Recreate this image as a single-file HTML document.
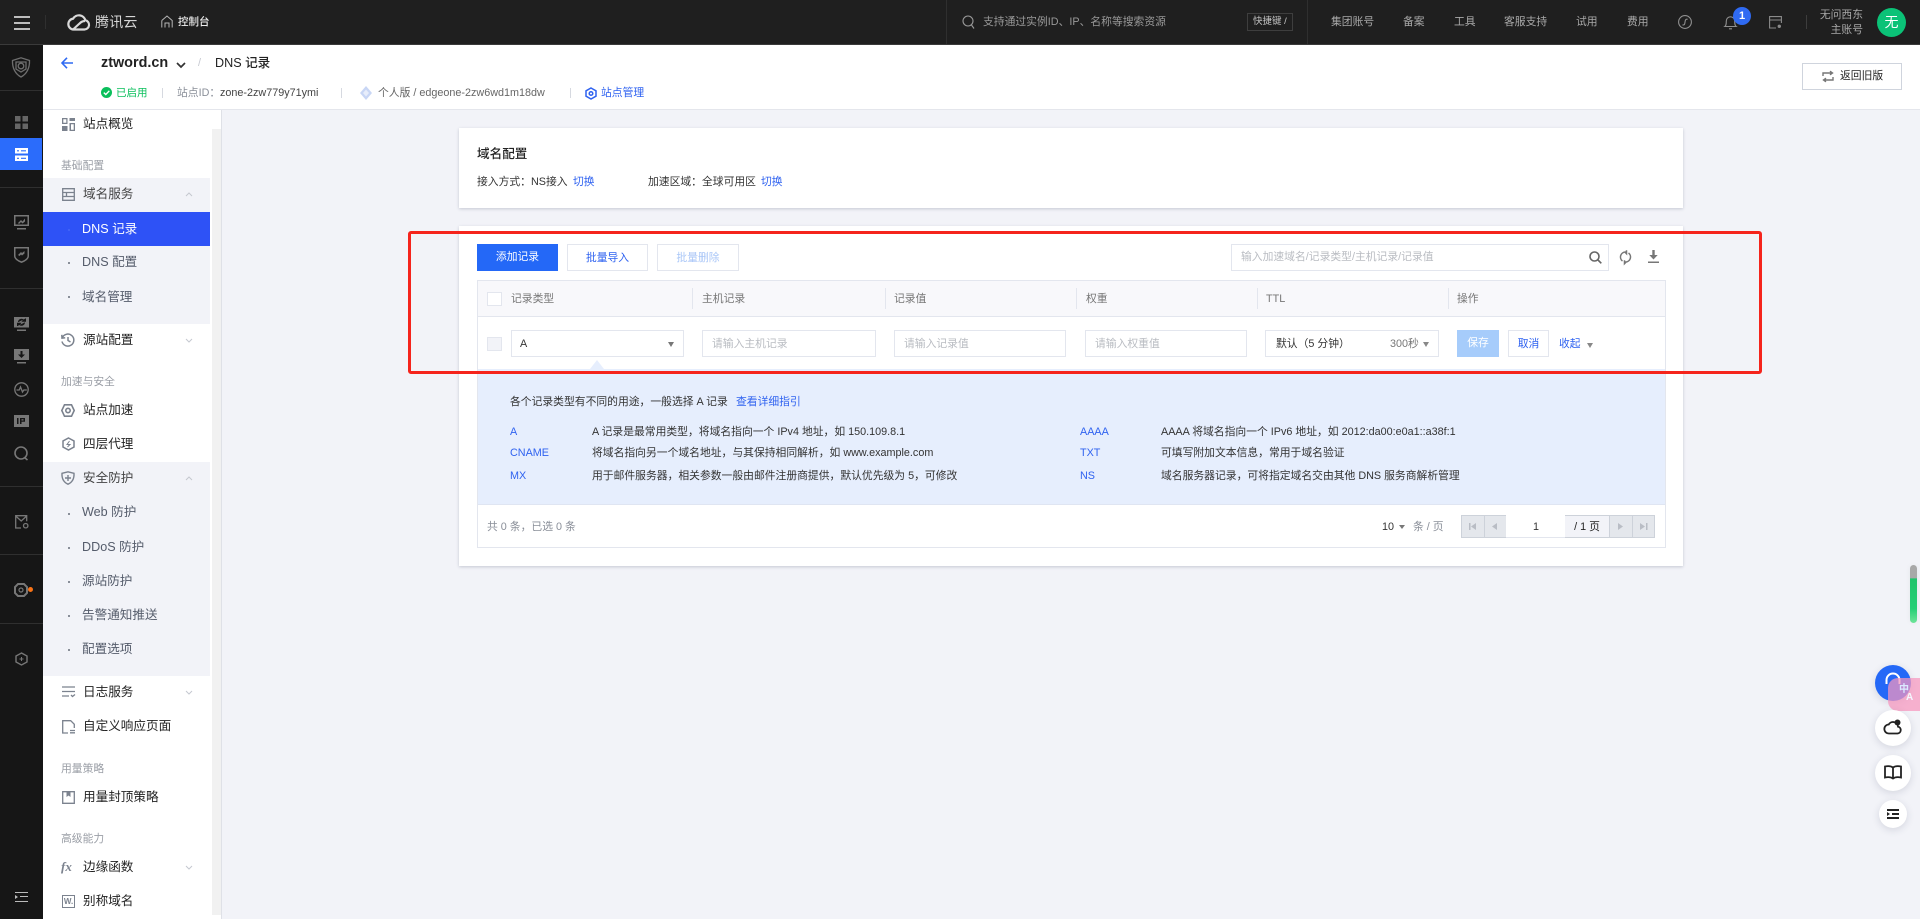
<!DOCTYPE html>
<html lang="zh-CN">
<head>
<meta charset="utf-8">
<title>DNS 记录</title>
<style>
*{box-sizing:border-box;margin:0;padding:0}
html,body{width:1920px;height:919px;overflow:hidden;background:#f2f3f8;font-family:"Liberation Sans","Noto Sans CJK SC",sans-serif;font-size:10.8px;color:#333}
.a{position:absolute}
.t{position:absolute;white-space:nowrap;line-height:20px;height:20px}
svg{position:absolute;overflow:visible;fill:none}
.f12{font-size:12.6px}
.f11{font-size:10.8px}
.blue{color:#2f62f0}
.grey{color:#8a8f99}
.ph{color:#b9bcc2}
.nav{color:#222;font-size:12.6px}
.sub{color:#555c6b;font-size:12.6px}
.lab{color:#9a9ea6;font-size:10.8px}
.top{color:#a9a9a9;font-size:10.8px}
.hd{color:#777;font-size:10.8px}
.box{position:absolute;background:#fff;border:1px solid #e3e6ee}
.dot{position:absolute;width:2px;height:2px;background:#8a8f99;left:68px}
.sep{position:absolute;width:1px;background:#2f2f2f}
.hs{position:absolute;width:1px;height:21px;top:288px;background:#e3e6ee}
.ms{position:absolute;width:1px;height:10px;top:88px;background:#d6d9e0}
.pg{position:absolute;top:515px;height:23px;background:#e4e7ec;border:1px solid #cdd2da}
.card{position:absolute;background:#fff;box-shadow:0 1px 3px rgba(40,50,80,.22)}
.cir{position:absolute;border-radius:50%;background:#fff;box-shadow:0 2px 8px rgba(40,50,80,.15)}
</style>
</head>
<body>

<!-- top bar -->
<div class="a" style="left:0;top:0;width:1920px;height:45px;background:#1f1f1f;border-bottom:1px solid #3a3a3a"></div>
<div class="a" style="left:14px;top:16px;width:16px;height:2px;background:#bdbdbd"></div>
<div class="a" style="left:14px;top:22px;width:16px;height:2px;background:#bdbdbd"></div>
<div class="a" style="left:14px;top:28px;width:16px;height:2px;background:#bdbdbd"></div>
<div class="sep" style="left:45px;top:15px;height:14px"></div>
<svg style="left:67px;top:13px" width="24" height="18" viewBox="0 0 24 18" stroke="#d9d9d9" stroke-width="2.2"><path d="M6 16.5h11.5a4.7 4.7 0 0 0 .8-9.3A6.6 6.6 0 0 0 6.2 5.6 5.5 5.5 0 0 0 6 16.5zM6 16.5l6-5.5c2-1.8 3.2-3 6-3"/></svg>
<div class="t" style="left:95px;top:12px;font-size:14px;color:#d6d6d6;letter-spacing:.2px">腾讯云</div>
<svg style="left:161px;top:15px" width="12" height="13" viewBox="0 0 12 13" stroke="#b5b5b5" stroke-width="1"><path d="M.8 5.5 6 1l5.2 4.5V12.500M.8 5.500V12.500M4 12.500V8h4v4.500"/></svg>
<div class="t" style="left:178px;top:12px;font-size:10.500px;color:#eee;font-weight:500">控制台</div>
<div class="sep" style="left:946px;top:0;height:44px"></div>
<div class="sep" style="left:1307px;top:0;height:44px"></div>
<svg style="left:962px;top:15px" width="14" height="15" viewBox="0 0 14 15" stroke="#9a9a9a" stroke-width="1.100"><circle cx="6" cy="6" r="5"/><path d="M9.500 10l2.500 3.500"/></svg>
<div class="t top" style="left:983px;top:12px;color:#999">支持通过实例ID、IP、名称等搜索资源</div>
<div class="a" style="left:1247px;top:13px;width:46px;height:18px;border:1px solid #3e3e3e"></div>
<div class="t" style="left:1253px;top:12px;font-size:9.500px;color:#c4c4c4">快捷键 /</div>
<div class="t top" style="left:1331px;top:12px">集团账号</div>
<div class="t top" style="left:1403px;top:12px">备案</div>
<div class="t top" style="left:1454px;top:12px">工具</div>
<div class="t top" style="left:1504px;top:12px">客服支持</div>
<div class="t top" style="left:1576px;top:12px">试用</div>
<div class="t top" style="left:1627px;top:12px">费用</div>
<svg style="left:1678px;top:15px" width="14" height="14" viewBox="0 0 14 14" stroke="#8f8f8f" stroke-width="1.100"><circle cx="7" cy="7" r="6.400"/><path d="M4.500 9.800c2 .6 2.300-.8 2.500-2.600.2-2 .6-3.500 2.600-2.900"/></svg>
<svg style="left:1724px;top:14px" width="13" height="16" viewBox="0 0 13 16" stroke="#8f8f8f" stroke-width="1.100"><path d="M.8 12.500c1.500-1.200 1.500-3 1.500-5.500a4.200 4.200 0 0 1 8.400 0c0 2.500 0 4.300 1.500 5.500zM5 14.800h3"/></svg>
<div class="a" style="left:1733px;top:7px;width:18px;height:18px;border-radius:50%;background:#2f6af2;color:#fff;font-weight:700;font-size:11px;line-height:18px;text-align:center">1</div>
<svg style="left:1769px;top:16px" width="13" height="13" viewBox="0 0 13 13" stroke="#8a8a8a" stroke-width="1.100"><path d="M7 12H.6V.6h11.800V7M.6 4h11.800"/><circle cx="10.300" cy="10.300" r="1.700" fill="#8a8a8a" stroke="none"/></svg>
<div class="sep" style="left:1806px;top:15px;height:14px;background:#3d3d3d"></div>
<div class="t top" style="right:57px;top:5px">无问西东</div>
<div class="t top" style="right:57px;top:20px">主账号</div>
<div class="a" style="left:1877px;top:8px;width:29px;height:29px;border-radius:50%;background:#0bc277;color:#fff;font-size:14px;line-height:29px;text-align:center">无</div>

<!-- rail -->
<div class="a" style="left:0;top:45px;width:43px;height:874px;background:#161616"></div>
<div class="sep" style="left:0;top:90px;width:43px;height:1px"></div>
<div class="sep" style="left:0;top:187px;width:43px;height:1px"></div>
<div class="sep" style="left:0;top:288px;width:43px;height:1px"></div>
<div class="sep" style="left:0;top:486px;width:43px;height:1px"></div>
<div class="sep" style="left:0;top:554px;width:43px;height:1px"></div>
<div class="sep" style="left:0;top:623px;width:43px;height:1px"></div>
<div class="a" style="left:0;top:138px;width:42px;height:32px;background:#2b6cfb"></div>
<svg style="left:11px;top:57px" width="20" height="21" viewBox="0 0 20 21" stroke="#6e6e6e" stroke-width="1.300"><path d="M1.500 3.500 10 .8l8.500 2.700c.3 7.500-2.800 13.500-8.500 16.500C4.300 17 1.200 11 1.500 3.500z"/><path d="M5 5h10v7l-5 3-5-3z"/><circle cx="10" cy="9" r="2.800"/></svg>
<svg style="left:15px;top:116px" width="13" height="13" viewBox="0 0 13 13"><path fill="#666" d="M0 0h5.500v5.500H0zM7.500 0H13v5.500H7.500zM0 7.500h5.500V13H0zM7.500 7.500H13V13H7.500z"/></svg>
<svg style="left:15px;top:148px" width="13" height="13" viewBox="0 0 13 13"><path fill="#fff" d="M0 0h13v5.500H0zM0 7.500h13V13H0z"/><path fill="#2b6cfb" d="M2 2.200h2v1.200H2zM6 2.200h5v1.200H6zM2 9.700h2v1.200H2zM6 9.700h5v1.200H6z"/></svg>
<svg style="left:14px;top:215px" width="15" height="15" viewBox="0 0 15 15"><path fill="#777" d="M0 0h15v11H0z"/><path fill="#161616" d="M1.500 1.500h12v8h-12z"/><path fill="#777" d="M3 13h9v1.500H3zM4 8l3-3 1.500 1.500L11 3.500v3L8.500 8.500 7 7 5 9z"/></svg>
<svg style="left:14px;top:247px" width="15" height="16" viewBox="0 0 15 16"><path fill="#777" d="M0 0h15v9c0 3-3.500 5.500-7.500 7C3.500 14.500 0 12 0 9z"/><path fill="#161616" d="M1.500 1.500h12V9c0 2-2.500 4-6 5.300-3.500-1.300-6-3.300-6-5.300z"/><path fill="#777" d="M4 8l3-3 1 1 2.500-2v2.500L8 8.500l-1-1-1.500 1.500z"/></svg>
<svg style="left:14px;top:317px" width="15" height="14" viewBox="0 0 15 14"><path fill="#777" d="M0 0h15v10.500H0zM3 12.500h9V14H3z"/><path fill="#161616" d="M4.500 5a3 3 0 0 1 5-2l-1 1.200h3V1.500M10.500 5.500a3 3 0 0 1-5 2l1-1.200h-3V9" stroke="#161616"/></svg>
<svg style="left:14px;top:349px" width="15" height="15" viewBox="0 0 15 15"><path fill="#777" d="M0 0h15v11H0zM3 13h9v1.500H3z"/><path fill="#161616" d="M6.500 2h2v3.500H11L7.500 9 4 5.500h2.500z"/></svg>
<svg style="left:14px;top:382px" width="15" height="15" viewBox="0 0 15 15" stroke="#777" stroke-width="1.300"><circle cx="7.500" cy="7.500" r="6.700"/><path d="M2.500 8h2.700l1.300-3 2 5 1.300-2h3"/></svg>
<svg style="left:14px;top:415px" width="15" height="12" viewBox="0 0 15 12"><path fill="#777" d="M0 0h15v12H0z"/><path fill="#161616" d="M3 3h1.500v6H3zM6 3h5v3.700H7.500V9H6zM7.500 4.300v1.200H9.500V4.300z"/></svg>
<svg style="left:14px;top:446px" width="15" height="15" viewBox="0 0 15 15" stroke="#777" stroke-width="1.600"><circle cx="7" cy="7" r="6"/><path d="M10.500 11.500l3 2.500"/></svg>
<svg style="left:15px;top:515px" width="14" height="14" viewBox="0 0 14 14" stroke="#777" stroke-width="1.300"><path d="M6 13H.7V.7h11v5.500M.7 1l5.500 5 5.500-5"/><circle cx="10.700" cy="10.700" r="2.200"/></svg>
<svg style="left:14px;top:583px" width="14" height="14" viewBox="0 0 14 14" stroke="#777" stroke-width="2"><path d="M4 1h6l3 3v6l-3 3H4l-3-3V4z"/><circle cx="7" cy="7" r="2" stroke-width="1.200"/></svg>
<div class="a" style="left:28px;top:587px;width:5px;height:5px;border-radius:50%;background:#f97316"></div>
<svg style="left:15px;top:652px" width="13" height="14" viewBox="0 0 13 14" stroke="#777" stroke-width="1.400"><path d="M6.500 1 12 4v6l-5.500 3L1 10V4z"/><path d="M6.500 5v4M4.500 7h4" stroke-width="1"/></svg>
<div class="a" style="left:15px;top:892px;width:13px;height:1px;background:#bbb"></div>
<div class="a" style="left:20px;top:896px;width:8px;height:1px;background:#bbb"></div>
<div class="a" style="left:15px;top:901px;width:13px;height:1px;background:#bbb"></div>
<div class="a" style="left:15px;top:895px;border-left:3px solid #bbb;border-top:2px solid transparent;border-bottom:2px solid transparent"></div>

<!-- header -->
<div class="a" style="left:43px;top:45px;width:1877px;height:65px;background:#fff;border-bottom:1px solid #e4e6ec"></div>
<svg style="left:61px;top:57px" width="12" height="12" viewBox="0 0 12 12" stroke="#2f6af2" stroke-width="1.600"><path d="M12 6H1M6 .8 1 6l5 5.200"/></svg>
<div class="t" style="left:101px;top:53px;font-size:14.400px;font-weight:700;color:#222">ztword.cn</div>
<svg style="left:176px;top:62px" width="10" height="6" viewBox="0 0 10 6" stroke="#333" stroke-width="1.700"><path d="M1 1l4 4 4-4"/></svg>
<div class="t" style="left:198px;top:53px;color:#c5c8d0;font-size:10.800px">/</div>
<div class="t" style="left:215px;top:53px;font-size:12.600px;color:#222;font-weight:500">DNS 记录</div>
<svg style="left:101px;top:87px" width="11" height="11" viewBox="0 0 11 11"><circle cx="5.500" cy="5.500" r="5.500" fill="#0abf5b"/><path d="M2.800 5.600 4.800 7.500 8.300 3.800" stroke="#fff" stroke-width="1.400"/></svg>
<div class="t" style="left:116px;top:83px;font-size:10.500px;color:#0abf5b">已启用</div>
<div class="ms" style="left:162px"></div>
<div class="t grey f11" style="left:177px;top:83px">站点ID：</div>
<div class="t f11" style="left:220px;top:83px;color:#444">zone-2zw779y71ymi</div>
<div class="ms" style="left:341px"></div>
<svg style="left:360px;top:86px" width="12" height="14" viewBox="0 0 12 14"><path fill="#c8d6f5" d="M6 0l6 7-6 7-6-7z"/><path fill="#e7edfb" d="M6 3.500 9 7l-3 3.500L3 7z"/></svg>
<div class="t f11" style="left:378px;top:83px;color:#666">个人版 / edgeone-2zw6wd1m18dw</div>
<div class="ms" style="left:570px"></div>
<svg style="left:585px;top:87px" width="12" height="13" viewBox="0 0 12 13" stroke="#2f62f0" stroke-width="1.500"><path d="M6 1l5 2.800v5.400L6 12 1 9.200V3.800z"/><circle cx="6" cy="6.500" r="1.800"/></svg>
<div class="t f11 blue" style="left:601px;top:83px">站点管理</div>
<div class="a" style="left:1802px;top:63px;width:100px;height:27px;background:#fff;border:1px solid #cfd4dd"></div>
<svg style="left:1822px;top:71px" width="12" height="11" viewBox="0 0 12 11" stroke="#777" stroke-width="1.400"><path d="M1 5V2h9M8 .2 10.500 2 8 3.800M11 6v3H2M4 7.200 1.500 9 4 10.800"/></svg>
<div class="t f11" style="left:1840px;top:66px;color:#222">返回旧版</div>

<!-- sidebar -->
<div class="a" style="left:43px;top:110px;width:179px;height:809px;background:#fff"></div>
<div class="a" style="left:212px;top:129px;width:9px;height:786px;background:#f1f1f1"></div>
<div class="a" style="left:221px;top:110px;width:1px;height:809px;background:#dfe1e7"></div>
<div class="a" style="left:43px;top:178px;width:167px;height:146px;background:#f2f3f8"></div>
<div class="a" style="left:43px;top:462px;width:167px;height:214px;background:#f2f3f8"></div>
<div class="a" style="left:43px;top:212px;width:167px;height:34px;background:#2e52f6"></div>

<svg style="left:62px;top:118px" width="13" height="13" viewBox="0 0 13 13"><path fill="#7b828e" d="M0 0h5.500v6H0zM7.500 0H13v3H7.500zM0 8h5.500v5H0zM7.500 5H13v8H7.500z"/><path fill="#fff" d="M1.300 1.300h3v3.400h-3zM9 6.300h2.700v5.400H9z"/></svg>
<div class="t nav" style="left:83px;top:114px">站点概览</div>
<div class="t lab" style="left:61px;top:156px">基础配置</div>
<svg style="left:62px;top:188px" width="13" height="13" viewBox="0 0 13 13" stroke="#7b828e" stroke-width="1.300"><path d="M.7.700h11.600v11.600H.7zM.7 4.500h11.600M.7 8.500h11.600M4.500 4.500v4"/></svg>
<div class="t nav" style="left:83px;top:184px;color:#444">域名服务</div>
<svg style="left:185px;top:192px" width="8" height="5" viewBox="0 0 8 5" stroke="#c5c8d0"><path d="M1 4l3-3 3 3"/></svg>
<div class="dot" style="background:#3f62f8;top:229px"></div>
<div class="t nav" style="left:82px;top:219px;color:#fff">DNS 记录</div>
<div class="dot" style="top:262px"></div>
<div class="t sub" style="left:82px;top:252px">DNS 配置</div>
<div class="dot" style="top:296px"></div>
<div class="t sub" style="left:82px;top:287px">域名管理</div>

<svg style="left:61px;top:333px" width="14" height="14" viewBox="0 0 14 14" stroke="#7b828e" stroke-width="1.500"><path d="M1.200 5A6 6 0 1 1 1 8.500M.8 1.800 1 5.200l3.200-.4M7 4v3.500l2.500 1.500"/></svg>
<div class="t nav" style="left:83px;top:330px">源站配置</div>
<svg style="left:185px;top:338px" width="8" height="5" viewBox="0 0 8 5" stroke="#c5c8d0"><path d="M1 1l3 3 3-3"/></svg>
<div class="t lab" style="left:61px;top:372px">加速与安全</div>
<svg style="left:61px;top:404px" width="14" height="13" viewBox="0 0 14 13" stroke="#7b828e" stroke-width="1.600"><path d="M3.500.8h7L13.200 6.500 10.500 12.200h-7L.8 6.500z"/><circle cx="7" cy="6.500" r="2.200"/></svg>
<div class="t nav" style="left:83px;top:400px">站点加速</div>
<svg style="left:62px;top:437px" width="13" height="14" viewBox="0 0 13 14" stroke="#7b828e" stroke-width="1.500"><path d="M6.500 1 12 4v6l-5.500 3L1 10V4z"/><path d="M7.500 4 5 7.500h3L5.500 10" stroke-width="1"/></svg>
<div class="t nav" style="left:83px;top:434px">四层代理</div>
<svg style="left:61px;top:471px" width="14" height="14" viewBox="0 0 14 14" stroke="#7b828e" stroke-width="1.400"><path d="M1 2.300 7 .8l6 1.500c.3 5-1.800 9-6 10.900C2.800 11.300.7 7.300 1 2.300zM7 4v6M4 7h6"/></svg>
<div class="t nav" style="left:83px;top:468px;color:#444">安全防护</div>
<svg style="left:185px;top:476px" width="8" height="5" viewBox="0 0 8 5" stroke="#c5c8d0"><path d="M1 4l3-3 3 3"/></svg>
<div class="dot" style="top:513px"></div>
<div class="t sub" style="left:82px;top:502px">Web 防护</div>
<div class="dot" style="top:547px"></div>
<div class="t sub" style="left:82px;top:537px">DDoS 防护</div>
<div class="dot" style="top:581px"></div>
<div class="t sub" style="left:82px;top:571px">源站防护</div>
<div class="dot" style="top:615px"></div>
<div class="t sub" style="left:82px;top:605px">告警通知推送</div>
<div class="dot" style="top:649px"></div>
<div class="t sub" style="left:82px;top:639px">配置选项</div>
<svg style="left:62px;top:686px" width="13" height="12" viewBox="0 0 13 12" stroke="#7b828e" stroke-width="1.300"><path d="M0 1h13M0 5.500h13M0 10h7M9 9l1.500 1.500L13 8.500"/></svg>
<div class="t nav" style="left:83px;top:682px">日志服务</div>
<svg style="left:185px;top:690px" width="8" height="5" viewBox="0 0 8 5" stroke="#c5c8d0"><path d="M1 1l3 3 3-3"/></svg>
<svg style="left:62px;top:720px" width="13" height="14" viewBox="0 0 13 14" stroke="#7b828e" stroke-width="1.300"><path d="M6 13H.7V.7h8l3.600 3.600V8M8 10.500h5M8 12.800h5"/></svg>
<div class="t nav" style="left:83px;top:716px">自定义响应页面</div>
<div class="t lab" style="left:61px;top:759px">用量策略</div>
<svg style="left:62px;top:791px" width="13" height="13" viewBox="0 0 13 13" stroke="#7b828e" stroke-width="1.300"><path d="M.7.700h11.600v11.600H.7z"/><path fill="#7b828e" stroke="none" d="M4.500 1h4v5L6.500 4.500 4.500 6z"/></svg>
<div class="t nav" style="left:83px;top:787px">用量封顶策略</div>
<div class="t lab" style="left:61px;top:829px">高级能力</div>
<div class="t" style="left:61px;top:857px;font-size:13px;font-style:italic;font-weight:700;color:#7b828e;font-family:'Liberation Serif',serif">fx</div>
<div class="t nav" style="left:83px;top:857px">边缘函数</div>
<svg style="left:185px;top:865px" width="8" height="5" viewBox="0 0 8 5" stroke="#c5c8d0"><path d="M1 1l3 3 3-3"/></svg>
<div class="a" style="left:62px;top:895px;width:13px;height:13px;border:1px solid #7b828e;font-size:8px;line-height:11px;text-align:center;font-weight:700;color:#7b828e">W.</div>
<div class="t nav" style="left:83px;top:891px">别称域名</div>

<!-- card 1 -->
<div class="card" style="left:459px;top:128px;width:1224px;height:80px"></div>
<div class="t f12" style="left:477px;top:144px;color:#222;font-weight:500">域名配置</div>
<div class="t f11" style="left:477px;top:172px;color:#333">接入方式：NS接入</div>
<div class="t f11 blue" style="left:573px;top:172px">切换</div>
<div class="t f11" style="left:648px;top:172px;color:#333">加速区域：全球可用区</div>
<div class="t f11 blue" style="left:761px;top:172px">切换</div>

<!-- card 2 -->
<div class="card" style="left:459px;top:226px;width:1224px;height:340px"></div>
<div class="a" style="left:477px;top:244px;width:81px;height:27px;background:#2468f7;color:#fff;font-size:10.800px;line-height:27px;text-align:center">添加记录</div>
<div class="box" style="left:567px;top:244px;width:81px;height:27px;color:#2f62f0;line-height:27px;text-align:center">批量导入</div>
<div class="box" style="left:657px;top:244px;width:82px;height:27px;color:#a9c6f7;line-height:27px;text-align:center">批量删除</div>
<div class="box" style="left:1231px;top:244px;width:378px;height:27px"></div>
<div class="t f11 ph" style="left:1241px;top:247px">输入加速域名/记录类型/主机记录/记录值</div>
<svg style="left:1589px;top:251px" width="13" height="13" viewBox="0 0 13 13" stroke="#666" stroke-width="1.600"><circle cx="5.500" cy="5.500" r="4.500"/><path d="M9 9l3.300 3.300"/></svg>
<svg style="left:1620px;top:250px" width="11" height="14" viewBox="0 0 11 14" stroke="#777" stroke-width="1.500"><path d="M2.500 11A5 5 0 0 1 5.500 2h1M6.500.3v3.400L4.800 2M8.500 3A5 5 0 0 1 5.500 12h-1M4.500 10.300v3.400L6.200 12"/></svg>
<svg style="left:1648px;top:250px" width="11" height="14" viewBox="0 0 11 14"><path fill="#777" d="M4.300 0h2.400v5h3L5.500 9.500 1.300 5h3zM0 11.500h11V13H0z"/></svg>

<!-- table -->
<div class="a" style="left:477px;top:280px;width:1189px;height:268px;background:#fff;border:1px solid #e3e6ee"></div>
<div class="a" style="left:478px;top:281px;width:1187px;height:36px;background:#f8f8fb;border-bottom:1px solid #e3e6ee"></div>
<div class="box" style="left:487px;top:292px;width:15px;height:14px"></div>
<div class="t f11 hd" style="left:511px;top:289px">记录类型</div>
<div class="hs" style="left:692px"></div>
<div class="t f11 hd" style="left:702px;top:289px">主机记录</div>
<div class="hs" style="left:885px"></div>
<div class="t f11 hd" style="left:894px;top:289px">记录值</div>
<div class="hs" style="left:1076px"></div>
<div class="t f11 hd" style="left:1086px;top:289px">权重</div>
<div class="hs" style="left:1257px"></div>
<div class="t f11 hd" style="left:1266px;top:289px">TTL</div>
<div class="hs" style="left:1448px"></div>
<div class="t f11 hd" style="left:1457px;top:289px">操作</div>

<div class="a" style="left:487px;top:337px;width:15px;height:14px;background:#f2f3f8;border:1px solid #e3e6ee"></div>
<div class="box" style="left:511px;top:330px;width:173px;height:27px"></div>
<div class="t f11" style="left:520px;top:334px;color:#333">A</div>
<div class="a" style="left:668px;top:342px;border-top:5px solid #777;border-left:3.500px solid transparent;border-right:3.500px solid transparent"></div>
<div class="box" style="left:702px;top:330px;width:174px;height:27px"></div>
<div class="t f11 ph" style="left:712px;top:334px">请输入主机记录</div>
<div class="box" style="left:894px;top:330px;width:172px;height:27px"></div>
<div class="t f11 ph" style="left:904px;top:334px">请输入记录值</div>
<div class="box" style="left:1085px;top:330px;width:162px;height:27px"></div>
<div class="t f11 ph" style="left:1095px;top:334px">请输入权重值</div>
<div class="box" style="left:1265px;top:330px;width:174px;height:27px"></div>
<div class="t f11" style="left:1276px;top:334px;color:#333">默认（5 分钟）</div>
<div class="t f11" style="left:1390px;top:334px;color:#777">300秒</div>
<div class="a" style="left:1423px;top:342px;border-top:5px solid #888;border-left:3.500px solid transparent;border-right:3.500px solid transparent"></div>
<div class="a" style="left:1457px;top:330px;width:42px;height:27px;background:#a6ccfb;color:#fff;font-size:10.800px;line-height:27px;text-align:center">保存</div>
<div class="box" style="left:1508px;top:330px;width:41px;height:27px;color:#2f62f0;line-height:27px;text-align:center">取消</div>
<div class="t f11 blue" style="left:1559px;top:334px">收起</div>
<div class="a" style="left:1587px;top:343px;border-top:5px solid #888;border-left:3.500px solid transparent;border-right:3.500px solid transparent"></div>

<!-- info panel -->
<div class="a" style="left:478px;top:369px;width:1187px;height:136px;background:#e6eefd;border-bottom:1px solid #dfe5f2"></div>
<div class="a" style="left:590px;top:360px;border-bottom:9px solid #e6eefd;border-left:7px solid transparent;border-right:7px solid transparent"></div>
<div class="t f11" style="left:510px;top:392px;color:#333">各个记录类型有不同的用途，一般选择 A 记录</div>
<div class="t f11 blue" style="left:736px;top:392px">查看详细指引</div>
<div class="t f11 blue" style="left:510px;top:422px">A</div>
<div class="t f11" style="left:592px;top:422px;color:#333">A 记录是最常用类型，将域名指向一个 IPv4 地址，如 150.109.8.1</div>
<div class="t f11 blue" style="left:1080px;top:422px">AAAA</div>
<div class="t f11" style="left:1161px;top:422px;color:#333">AAAA 将域名指向一个 IPv6 地址，如 2012:da00:e0a1::a38f:1</div>
<div class="t f11 blue" style="left:510px;top:443px">CNAME</div>
<div class="t f11" style="left:592px;top:443px;color:#333">将域名指向另一个域名地址，与其保持相同解析，如 www.example.com</div>
<div class="t f11 blue" style="left:1080px;top:443px">TXT</div>
<div class="t f11" style="left:1161px;top:443px;color:#333">可填写附加文本信息，常用于域名验证</div>
<div class="t f11 blue" style="left:510px;top:466px">MX</div>
<div class="t f11" style="left:592px;top:466px;color:#333">用于邮件服务器，相关参数一般由邮件注册商提供，默认优先级为 5，可修改</div>
<div class="t f11 blue" style="left:1080px;top:466px">NS</div>
<div class="t f11" style="left:1161px;top:466px;color:#333">域名服务器记录，可将指定域名交由其他 DNS 服务商解析管理</div>

<!-- footer -->
<div class="t f11 grey" style="left:487px;top:517px">共 0 条，已选 0 条</div>
<div class="t f11" style="left:1382px;top:517px;color:#333">10</div>
<div class="a" style="left:1399px;top:525px;border-top:4px solid #777;border-left:3.500px solid transparent;border-right:3.500px solid transparent"></div>
<div class="t f11 grey" style="left:1413px;top:517px">条 / 页</div>
<div class="pg" style="left:1461px;width:24px"></div>
<div class="pg" style="left:1484px;width:23px"></div>
<div class="a" style="left:1506px;top:515px;width:60px;height:23px;background:#fff;border-bottom:1px solid #e3e6ee;font-size:10.800px;line-height:25px;text-align:center;color:#333">1</div>
<div class="a" style="left:1565px;top:515px;width:45px;height:23px;background:#f2f3f8;border:1px solid #cdd2da;border-left:0;font-size:10.800px;line-height:23px;text-align:center;color:#222">/ 1 页</div>
<div class="pg" style="left:1609px;width:24px"></div>
<div class="pg" style="left:1632px;width:23px"></div>
<svg style="left:1469px;top:522px" width="8" height="9" viewBox="0 0 8 9"><path fill="#b9bdc5" d="M0 1h1.500v7H0zM7 1v7L2 4.500z"/></svg>
<svg style="left:1492px;top:522px" width="6" height="9" viewBox="0 0 6 9"><path fill="#b9bdc5" d="M5 1v7L0 4.500z"/></svg>
<svg style="left:1618px;top:522px" width="6" height="9" viewBox="0 0 6 9"><path fill="#b9bdc5" d="M0 1v7l5-3.500z"/></svg>
<svg style="left:1640px;top:522px" width="8" height="9" viewBox="0 0 8 9"><path fill="#b9bdc5" d="M0 1v7l5-3.500zM6 1h1.500v7H6z"/></svg>

<!-- red annotation -->
<div class="a" style="left:408px;top:231px;width:1354px;height:143px;border:3px solid #f5241c;border-radius:3px"></div>

<!-- floats -->
<div class="a" style="left:1910px;top:565px;width:7px;height:58px;border-radius:4px;background:linear-gradient(#a8a8a8 0,#a8a8a8 22%,#1fc46c 24%,#25cf76 75%,#6fe49a 100%);box-shadow:0 0 6px rgba(0,0,0,.05)"></div>
<div class="a" style="left:1875px;top:665px;width:36px;height:36px;border-radius:50%;background:#2468f7;box-shadow:0 2px 8px rgba(40,50,80,.15)"></div>
<svg style="left:1884px;top:672px" width="18" height="18" viewBox="0 0 18 18" stroke="#fff" stroke-width="2"><path d="M2.500 12V8a6.500 6.500 0 0 1 13 0v4"/></svg>
<div class="a" style="left:1888px;top:678px;width:32px;height:33px;background:rgba(246,150,190,.72);border-radius:10px 0 0 10px"></div>
<div class="t" style="left:1899px;top:680px;font-size:10px;color:#dbe8ff;font-weight:700">中</div>
<div class="t" style="left:1906px;top:688px;font-size:10px;color:#f4f7ff;font-weight:700">A</div>
<div class="cir" style="left:1875px;top:710px;width:36px;height:36px"></div>
<svg style="left:1884px;top:719px" width="18" height="16" viewBox="0 0 18 16" stroke="#222" stroke-width="1.800"><path d="M5 14.500h8.500a3.500 3.500 0 0 0 .5-6.900V7.500a5 5 0 0 0-9.300-2A4.500 4.500 0 0 0 5 14.500z"/><circle cx="13.500" cy="3.500" r="3" fill="#222" stroke="none"/></svg>
<div class="cir" style="left:1875px;top:755px;width:36px;height:36px"></div>
<svg style="left:1884px;top:765px" width="18" height="16" viewBox="0 0 18 16" stroke="#222" stroke-width="1.800"><path d="M1 1.500c3-.6 6-.4 8 1 2-1.400 5-1.600 8-1v11c-3-.6-6-.4-8 1-2-1.400-5-1.600-8-1zM9 2.500v11"/></svg>
<div class="cir" style="left:1879px;top:800px;width:28px;height:28px"></div>
<div class="a" style="left:1887px;top:809px;width:12px;height:1.500px;background:#222"></div>
<div class="a" style="left:1892px;top:813px;width:7px;height:1.500px;background:#222"></div>
<div class="a" style="left:1887px;top:817px;width:12px;height:1.500px;background:#222"></div>
<div class="a" style="left:1887px;top:812px;border-left:3px solid #222;border-top:2px solid transparent;border-bottom:2px solid transparent"></div>

</body>
</html>
